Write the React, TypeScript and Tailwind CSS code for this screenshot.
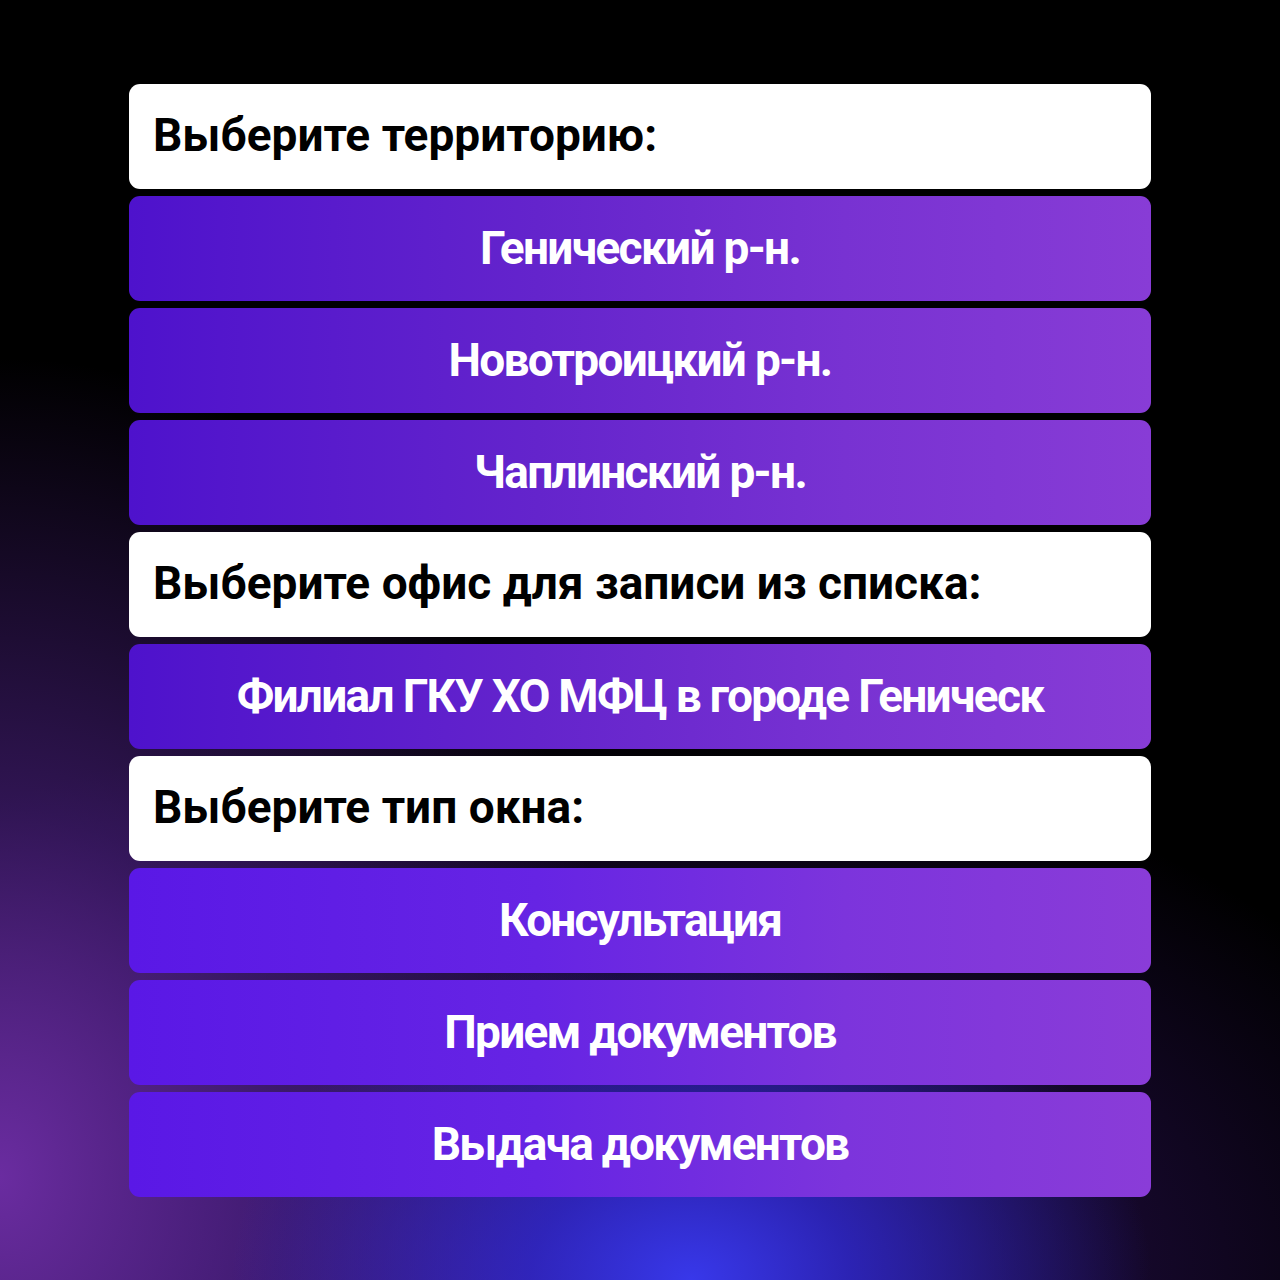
const font = { fontFamily: 'Roboto, "Noto Sans", sans-serif' };

type Row = { kind: 'title' | 'option'; text: string; bright?: boolean };

const ROWS: Row[] = [
  { kind: 'title', text: 'Выберите территорию:' },
  { kind: 'option', text: 'Генический р-н.' },
  { kind: 'option', text: 'Новотроицкий р-н.' },
  { kind: 'option', text: 'Чаплинский р-н.' },
  { kind: 'title', text: 'Выберите офис для записи из списка:' },
  { kind: 'option', text: 'Филиал ГКУ ХО МФЦ в городе Геническ' },
  { kind: 'title', text: 'Выберите тип окна:' },
  { kind: 'option', text: 'Консультация', bright: true },
  { kind: 'option', text: 'Прием документов', bright: true },
  { kind: 'option', text: 'Выдача документов', bright: true },
];

export default function App() {
  return (
    <div
      className="w-[1280px] h-[1280px] overflow-hidden bg-black bg-[radial-gradient(ellipse_460px_340px_at_54%_100%,#3838ea_0%,rgba(45,40,205,0.8)_35%,transparent_100%),radial-gradient(ellipse_640px_820px_at_0%_92%,#6a2ca0_0%,rgba(74,32,128,0.65)_45%,transparent_100%),radial-gradient(ellipse_1000px_560px_at_40%_100%,rgba(80,30,160,0.7)_0%,transparent_100%)]"
      style={font}
    >
      <div className="flex flex-col gap-[7px] pt-[84px] pl-[129px] w-[1151px]">
        {ROWS.map((r, i) =>
          r.kind === 'title' ? (
            <div
              key={i}
              className="h-[105px] rounded-[11px] bg-white flex items-center px-[24px] pb-[2px] text-black text-[46px] font-bold"
            >
              {r.text}
            </div>
          ) : (
            <div
              key={i}
              className={
                r.bright
                  ? 'h-[105px] rounded-[11px] bg-[linear-gradient(90deg,#5a18e6_0%,#6624e4_40%,#7c34dc_70%,#8a3cd8_100%)] flex items-center justify-center text-white text-[46px] font-bold tracking-[-1.8px]'
                  : 'h-[105px] rounded-[11px] bg-[linear-gradient(90deg,#4e12cc_0%,#6424cc_40%,#7832d2_70%,#883cd6_100%)] flex items-center justify-center text-white text-[46px] font-bold tracking-[-1.7px]'
              }
            >
              {r.text}
            </div>
          )
        )}
      </div>
    </div>
  );
}
